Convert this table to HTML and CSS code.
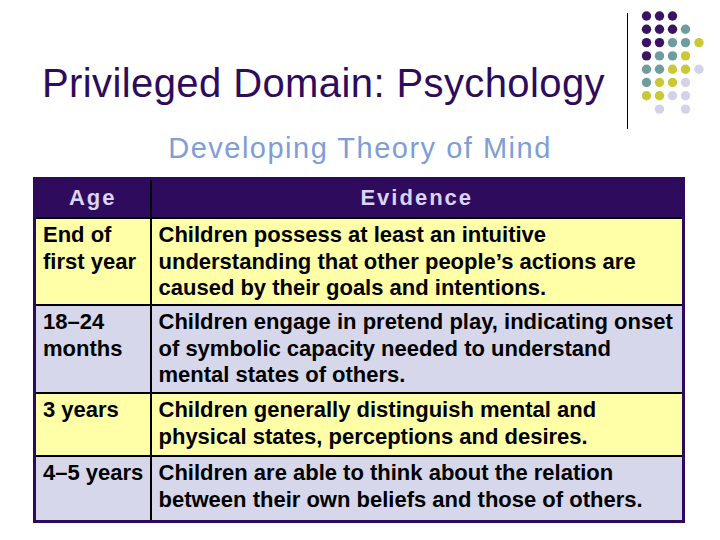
FILE: index.html
```html
<!DOCTYPE html>
<html lang="en">
<head>
<meta charset="utf-8">
<title>Privileged Domain: Psychology</title>
<link rel="stylesheet" href="styles.css">
</head>
<body>
<div class="slide">
  <div class="top">
    <h1 class="title">Privileged Domain: Psychology</h1>
    <svg class="ornament" width="90" height="130" viewBox="620 0 90 130" aria-hidden="true">
      <line x1="627.5" y1="13" x2="627.5" y2="129" stroke="#000" stroke-width="1"/>
      <g class="p">
        <circle cx="646.5" cy="16" r="4.7"/><circle cx="659.5" cy="16" r="4.7"/><circle cx="672.5" cy="16" r="4.7"/>
        <circle cx="646.5" cy="29.3" r="4.7"/><circle cx="659.5" cy="29.3" r="4.7"/><circle cx="672.5" cy="29.3" r="4.7"/>
        <circle cx="646.5" cy="42.6" r="4.7"/><circle cx="659.5" cy="42.6" r="4.7"/>
        <circle cx="646.5" cy="55.9" r="4.7"/>
      </g>
      <g class="t">
        <circle cx="685.5" cy="29.3" r="4.7"/>
        <circle cx="672.5" cy="42.6" r="4.7"/><circle cx="685.5" cy="42.6" r="4.7"/>
        <circle cx="659.5" cy="55.9" r="4.7"/><circle cx="672.5" cy="55.9" r="4.7"/>
        <circle cx="646.5" cy="69.2" r="4.7"/><circle cx="659.5" cy="69.2" r="4.7"/>
        <circle cx="646.5" cy="82.5" r="4.7"/>
      </g>
      <g class="y">
        <circle cx="699" cy="42.6" r="4.7"/>
        <circle cx="685.5" cy="55.9" r="4.7"/>
        <circle cx="672.5" cy="69.2" r="4.7"/><circle cx="685.5" cy="69.2" r="4.7"/>
        <circle cx="659.5" cy="82.5" r="4.7"/><circle cx="672.5" cy="82.5" r="4.7"/>
        <circle cx="646.5" cy="95.8" r="4.7"/><circle cx="659.5" cy="95.8" r="4.7"/>
      </g>
      <g class="l">
        <circle cx="699" cy="69.2" r="4.7"/>
        <circle cx="685.5" cy="82.5" r="4.7"/>
        <circle cx="672.5" cy="95.8" r="4.7"/><circle cx="685.5" cy="95.8" r="4.7"/>
        <circle cx="659.5" cy="109.1" r="4.7"/><circle cx="685.5" cy="109.1" r="4.7"/>
      </g>
    </svg>
  </div>
  <h2 class="subtitle">Developing Theory of Mind</h2>
  <table class="tom">
    <colgroup><col class="c-age"><col class="c-ev"></colgroup>
    <thead>
      <tr class="head"><th>Age</th><th>Evidence</th></tr>
    </thead>
    <tbody>
      <tr class="r1 yellow"><td>End of first year</td><td>Children possess at least an intuitive understanding that other people’s actions are caused by their goals and intentions.</td></tr>
      <tr class="r2 lav"><td>18–24 months</td><td>Children engage in pretend play, indicating onset of symbolic capacity needed to understand mental states of others.</td></tr>
      <tr class="r3 yellow"><td>3 years</td><td>Children generally distinguish mental and physical states, perceptions and desires.</td></tr>
      <tr class="r4 lav"><td>4–5 years</td><td>Children are able to think about the relation between their own beliefs and those of others.</td></tr>
    </tbody>
  </table>
</div>
</body>
</html>
```
FILE: styles.css
```css
html, body {
  margin: 0;
  padding: 0;
  background: #ffffff;
}
.slide {
  width: 720px;
  height: 540px;
  font-family: "Liberation Sans", Arial, sans-serif;
  overflow: hidden;
}
.top {
  display: flex;
  height: 130px;
}
.title {
  width: 620px;
  margin: 0;
  padding: 60px 0 0 42px;
  box-sizing: border-box;
  font-size: 40px;
  font-weight: normal;
  letter-spacing: 0.4px;
  line-height: 46px;
  color: #2e0b5c;
  white-space: nowrap;
}
.ornament { display: block; }
.ornament .p circle { fill: #3a1463; }
.ornament .t circle { fill: #6f9c9f; }
.ornament .y circle { fill: #c9c935; }
.ornament .l circle { fill: #d2d2e8; }
.subtitle {
  margin: 0;
  padding-top: 1px;
  text-align: center;
  font-size: 29px;
  letter-spacing: 1.5px;
  line-height: 34px;
  font-weight: normal;
  color: #7f9dd6;
}
.tom {
  margin: 12px 0 0 33px;
  width: 652px;
  border-collapse: collapse;
  border: 3px solid #2e0b5a;
  font-size: 22px;
  font-weight: bold;
  line-height: 26.5px;
  color: #000;
}
.c-age { width: 116px; }
.tom th, .tom td {
  border: 2px solid #000;
  text-align: left;
  vertical-align: top;
  padding: 3px 3px 0 7px;
}
.tom th {
  background: #2f0b5e;
  color: #dcd4f5;
  font-size: 22px;
  letter-spacing: 2px;
  text-align: center;
  height: 37px;
  vertical-align: middle;
  padding: 0;
}
.yellow td { background: #ffffa8; }
.lav td { background: #d7d7eb; }
.r1 td { height: 82px; }
.r2 td { height: 83px; }
.r3 td { height: 58px; }
.r4 td { height: 60px; }
```
